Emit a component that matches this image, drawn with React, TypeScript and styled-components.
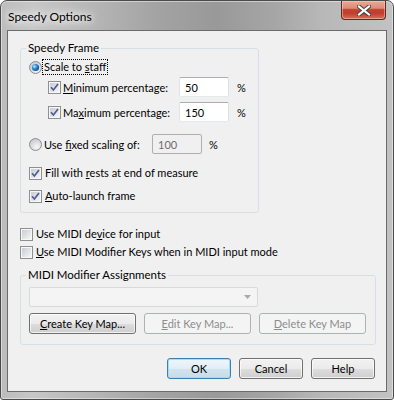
import React from 'react'
import styled, { createGlobalStyle, css } from 'styled-components'

const GlobalStyle = createGlobalStyle`
  html, body {
    margin: 0;
    padding: 0;
    background: #ffffff;
  }
  body {
    font-family: Lato, "Noto Sans", "Liberation Sans", sans-serif;
    font-size: 11px;
    color: #000;
  }
  * {
    box-sizing: border-box;
  }
`

const CheckBox: React.FC<{ checked?: boolean }> = ({ checked }) => (
  <svg width="13" height="13" viewBox="0 0 13 13" style={{ flex: 'none' }}>
    <defs>
      <linearGradient id="cbFill" x1="0" y1="0" x2="1" y2="1">
        <stop offset="0" stopColor="#c9ccd3" />
        <stop offset="1" stopColor="#f6f6f6" />
      </linearGradient>
    </defs>
    <rect x="0.5" y="0.5" width="12" height="12" fill="#f7f7f7" stroke="#8e8f8f" />
    <rect x="2" y="2" width="9" height="9" fill="url(#cbFill)" />
    {checked && (
      <path d="M3 6.3 L5.4 9 L10 3.1" fill="none" stroke="#4a5d96" strokeWidth="1.7" />
    )}
  </svg>
)

const Radio: React.FC<{ checked?: boolean }> = ({ checked }) => (
  <svg width="13" height="13" viewBox="0 0 13 13" style={{ flex: 'none' }}>
    <defs>
      <radialGradient id="rbFill" cx="0.6" cy="0.7" r="0.7">
        <stop offset="0" stopColor="#f8f8f8" />
        <stop offset="1" stopColor="#c6c8cc" />
      </radialGradient>
      <radialGradient id="rbDot" cx="0.35" cy="0.35" r="0.75">
        <stop offset="0" stopColor="#b9ecff" />
        <stop offset="0.45" stopColor="#2f8ad4" />
        <stop offset="1" stopColor="#0e3f83" />
      </radialGradient>
    </defs>
    <circle cx="6.5" cy="6.5" r="6" fill="url(#rbFill)" stroke="#8e8f8f" />
    {checked && <circle cx="6.5" cy="6.5" r="3.6" fill="url(#rbDot)" />}
  </svg>
)

const Dialog: React.FC = () => (
  <Window>
    <TitleBar>
      <TitleText>Speedy Options</TitleText>
      <CloseButton>
        <svg width="14" height="11" viewBox="0 0 14 11">
          <path d="M2 1.5 L12 9.5 M12 1.5 L2 9.5" stroke="#3f3f3f" strokeWidth="4" strokeLinecap="square" />
          <path d="M2 1.5 L12 9.5 M12 1.5 L2 9.5" stroke="#ffffff" strokeWidth="2.2" strokeLinecap="square" />
        </svg>
      </CloseButton>
    </TitleBar>

    <Client>
      <GroupBox $width={239} $padBottom={8}>
        <GroupLabel>Speedy Frame</GroupLabel>

        <Row $top={3}>
          <Radio checked />
          <FocusLabel>
            Scale to <u>s</u>taff
          </FocusLabel>
        </Row>

        <Row $top={2} $indent={19} $h={20}>
          <CheckBox checked />
          <FieldLabel $w={116}>
            <u>M</u>inimum percentage:
          </FieldLabel>
          <NumberBox readOnly value="50" />
          <Percent $gap={8}>%</Percent>
        </Row>

        <Row $top={5} $indent={19} $h={20}>
          <CheckBox checked />
          <FieldLabel $w={116}>
            Ma<u>x</u>imum percentage:
          </FieldLabel>
          <NumberBox readOnly value="150" />
          <Percent $gap={8}>%</Percent>
        </Row>

        <Row $top={12} $h={20}>
          <Radio />
          <FieldLabel $w={108}>
            Use <u>f</u>ixed scaling of:
          </FieldLabel>
          <NumberBox readOnly disabled value="100" />
          <Percent $gap={7}>%</Percent>
        </Row>

        <Row $top={11}>
          <CheckBox checked />
          <Label>
            Fill with <u>r</u>ests at end of measure
          </Label>
        </Row>

        <Row $top={7}>
          <CheckBox checked />
          <Label>
            <u>A</u>uto-launch frame
          </Label>
        </Row>
      </GroupBox>

      <Row $top={13}>
        <CheckBox />
        <Label>
          Use MIDI de<u>v</u>ice for input
        </Label>
      </Row>

      <Row $top={2}>
        <CheckBox />
        <Label>
          <u>U</u>se MIDI Modifier Keys when in MIDI input mode
        </Label>
      </Row>

      <GroupBox $width={356} $padBottom={10} $top={7}>
        <GroupLabel>MIDI Modifier Assignments</GroupLabel>
        <Combo>
          <svg width="7" height="4" viewBox="0 0 7 4">
            <path d="M0 0 H7 L3.5 4 Z" fill="#a9a9a9" />
          </svg>
        </Combo>
        <ButtonRow $top={6} $gap={8}>
          <PushButton $w={107}>
            <u>C</u>reate Key Map...
          </PushButton>
          <PushButton $w={107} disabled>
            <u>E</u>dit Key Map...
          </PushButton>
          <PushButton $w={107} disabled>
            <u>D</u>elete Key Map
          </PushButton>
        </ButtonRow>
      </GroupBox>

      <ButtonRow $top={13} $gap={8} $right>
        <PushButton $w={64} $default>OK</PushButton>
        <PushButton $w={64}>Cancel</PushButton>
        <PushButton $w={64}>Help</PushButton>
      </ButtonRow>
    </Client>
  </Window>
)

const Window = styled.div`
  width: 394px;
  height: 400px;
  display: flex;
  flex-direction: column;
  border: 1px solid #4b4b4b;
  border-radius: 7px 7px 3px 3px;
  overflow: hidden;
  background: linear-gradient(
    90deg,
    #bcbcbc 0%,
    #c7c7c7 8%,
    #b4b4b4 25%,
    #a3a3a3 40%,
    #999999 55%,
    #a6a6a6 70%,
    #b8b8b8 82%,
    #c2c2c2 100%
  );
  box-shadow: inset 0 0 0 1px rgba(255, 255, 255, 0.45);
`

const TitleBar = styled.div`
  height: 29px;
  flex: none;
  display: flex;
  align-items: center;
  justify-content: space-between;
  padding: 0 7px;
`

const TitleText = styled.span`
  font-size: 12px;
  color: #000;
  margin-top: 1px;
  text-shadow: 0 0 6px #fff, 0 0 10px #fff, 0 0 14px rgba(255, 255, 255, 0.9);
`

const CloseButton = styled.div`
  align-self: flex-start;
  width: 45px;
  height: 19px;
  border: 1px solid #5e2a22;
  border-top: none;
  border-radius: 0 0 4px 4px;
  display: flex;
  align-items: center;
  justify-content: center;
  background: linear-gradient(
    180deg,
    #e9a996 0%,
    #dd8c78 40%,
    #c4402f 48%,
    #c0402e 70%,
    #d6715d 100%
  );
  box-shadow: inset 0 0 0 1px rgba(255, 220, 210, 0.45);
`

const Client = styled.div`
  flex: 1;
  margin: 0 6px 7px 6px;
  border: 1px solid #6b6b6b;
  background: #f0f0f0;
  display: flex;
  flex-direction: column;
  align-items: flex-start;
  padding: 0 11px 11px 12px;
`

const GroupBox = styled.fieldset<{ $width: number; $padBottom: number; $top?: number }>`
  margin: ${(p) => p.$top ?? 9}px 0 0 0;
  width: ${(p) => p.$width}px;
  min-width: 0;
  padding: 0 8px ${(p) => p.$padBottom}px 8px;
  border: 1px solid #d5dfe5;
  border-radius: 3px;
`

const GroupLabel = styled.legend`
  margin-left: -3px;
  padding: 0 2px;
  line-height: 16px;
  font-size: 11.5px;
`

const Row = styled.div<{ $top: number; $indent?: number; $h?: number }>`
  display: flex;
  align-items: center;
  height: ${(p) => p.$h ?? 16}px;
  margin-top: ${(p) => p.$top}px;
  margin-left: ${(p) => p.$indent ?? 0}px;
  white-space: nowrap;

  u {
    text-underline-offset: 1px;
  }
`

const Label = styled.span`
  margin-left: 3px;
  line-height: 16px;
`

const FocusLabel = styled.span`
  margin-left: 1px;
  padding: 0 1px;
  line-height: 14px;
  outline: 1px dotted #000;
`

const FieldLabel = styled.span<{ $w: number }>`
  width: ${(p) => p.$w}px;
  margin-left: 2px;
`

const NumberBox = styled.input`
  width: 50px;
  height: 20px;
  margin: 0;
  padding: 0 0 0 5px;
  font: inherit;
  font-size: 11px;
  color: #000;
  background: #ffffff;
  border: 1px solid;
  border-color: #abadb3 #dbdfe6 #e3e9ef #e2e3ea;
  border-radius: 2px;
  outline: none;

  &:disabled {
    background: #f0f0f0;
    color: #6d6d6d;
    border-color: #afafaf;
  }
`

const Percent = styled.span<{ $gap: number }>`
  margin-left: ${(p) => p.$gap}px;
`

const Combo = styled.div`
  width: 229px;
  height: 20px;
  margin-top: 4px;
  border: 1px solid #d9d9d9;
  border-radius: 2px;
  background: #f4f4f4;
  display: flex;
  align-items: center;
  justify-content: flex-end;
  padding-right: 6px;
`

const ButtonRow = styled.div<{ $top: number; $gap: number; $right?: boolean }>`
  display: flex;
  gap: ${(p) => p.$gap}px;
  margin-top: ${(p) => p.$top}px;
  ${(p) =>
    p.$right &&
    css`
      align-self: flex-end;
    `}
`

const PushButton = styled.button<{ $w: number; $default?: boolean }>`
  width: ${(p) => p.$w}px;
  height: 21px;
  margin: 0;
  padding: 0;
  font: inherit;
  font-size: 11px;
  color: #000;
  border: 1px solid #707070;
  border-radius: 3px;
  background: linear-gradient(180deg, #f2f2f2 0%, #ebebeb 50%, #dddddd 51%, #cfcfcf 100%);
  box-shadow: inset 0 0 0 1px rgba(255, 255, 255, 0.7);

  ${(p) =>
    p.$default &&
    css`
      border-color: #3c7fb1;
      background: linear-gradient(180deg, #eef6fb 0%, #e2eef5 50%, #d2e4ee 51%, #c6dce9 100%);
      box-shadow: inset 0 0 0 1px #a6dcf5;
    `}

  &:disabled {
    color: #8d8d8d;
    border-color: #adb2b5;
    background: #f4f4f4;
    box-shadow: none;
  }
`

const App: React.FC = () => (
  <>
    <GlobalStyle />
    <Dialog />
  </>
)

export default App
